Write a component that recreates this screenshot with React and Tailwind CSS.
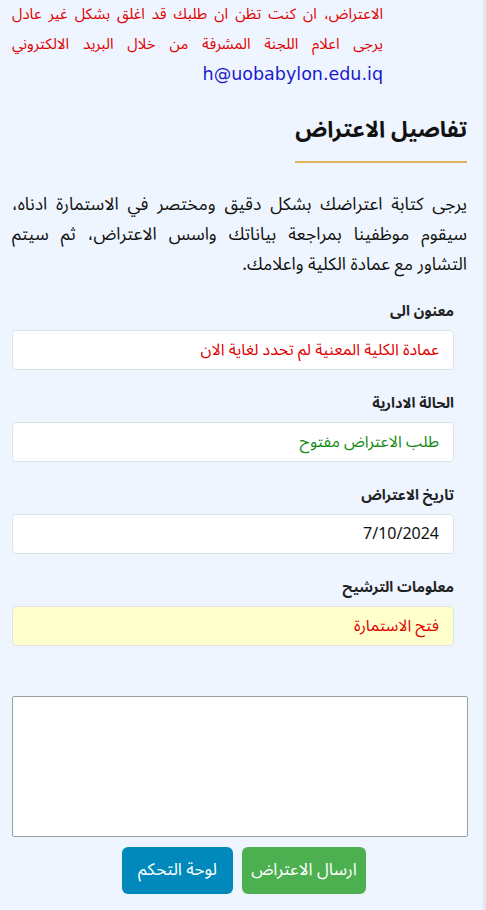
import React from 'react';

const arabic = { fontFamily: '"Noto Sans Arabic", "DejaVu Sans", "Noto Sans", sans-serif' };

function Field({ label, value, valueClass, boxClass }) {
  return (
    <div className="ml-3 mr-[29px]">
      <div className="text-[14.5px] font-bold leading-6 text-[#222] mb-[6px]">{label}</div>
      <div className={`h-10 rounded border border-[#dfe3e8] flex items-center pr-[14px] text-[16px] ${boxClass}`}>
        <span className={valueClass}>{value}</span>
      </div>
    </div>
  );
}

export default function App() {
  return (
    <div dir="rtl" style={arabic} className="w-[486px] min-h-[910px] bg-[#eef5fe] border-r-[3px] border-[#e3e8ee] overflow-hidden">
      <div className="ml-3 mr-[100px] -mt-px text-[15px] leading-[30px] text-[#e00000]">
        <div className="text-justify [text-align-last:justify]">الاعتراض، ان كنت تظن ان طلبك قد اغلق بشكل غير عادل</div>
        <div className="text-justify [text-align-last:justify]">يرجى اعلام اللجنة المشرفة من خلال البريد الالكتروني</div>
        <div className="text-[#1a1acc] text-[17.5px]" style={{ fontFamily: '"DejaVu Sans", Verdana, sans-serif' }}>h@uobabylon.edu.iq</div>
      </div>

      <div className="mr-4 ml-3 mt-[23px]">
        <h2 className="inline-block text-[22.5px] font-bold leading-9 text-[#111] pb-[13px] border-b-2 border-[#e2b45a]">تفاصيل الاعتراض</h2>
        <div className="mt-[27px] text-[17.5px] leading-[30px] text-[#111]">
          <div className="text-justify [text-align-last:justify] whitespace-nowrap">يرجى كتابة اعتراضك بشكل دقيق ومختصر في الاستمارة ادناه،</div>
          <div className="text-justify [text-align-last:justify] whitespace-nowrap">سيقوم موظفينا بمراجعة بياناتك واسس الاعتراض، ثم سيتم</div>
          <div>التشاور مع عمادة الكلية واعلامك.</div>
        </div>
      </div>

      <div className="mt-[20px] flex flex-col gap-[22px]">
        <Field label="معنون الى" value="عمادة الكلية المعنية لم تحدد لغاية الان" boxClass="bg-white" valueClass="text-[#e00000]" />
        <Field label="الحالة الادارية" value="طلب الاعتراض مفتوح" boxClass="bg-white" valueClass="text-[#138a13]" />
        <Field label="تاريخ الاعتراض" value="7/10/2024" boxClass="bg-white" valueClass="text-[#111]" />
        <Field label="معلومات الترشيح" value="فتح الاستمارة" boxClass="bg-[#ffffcc]" valueClass="text-[#e00000]" />
      </div>

      <div className="ml-3 mr-[15px] mt-[50px]">
        <textarea className="block w-full h-[141px] bg-white border border-[#9aa0a6] rounded-[2px] resize-none"></textarea>
      </div>

      <div className="mt-[10px] flex justify-center gap-[9px] pl-[5px]">
        <button className="h-[47px] w-[124px] whitespace-nowrap rounded-md bg-[#4caf50] text-white text-[17px]">ارسال الاعتراض</button>
        <button className="h-[47px] w-[111px] whitespace-nowrap rounded-md bg-[#0089ba] text-white text-[17px]">لوحة التحكم</button>
      </div>
    </div>
  );
}
